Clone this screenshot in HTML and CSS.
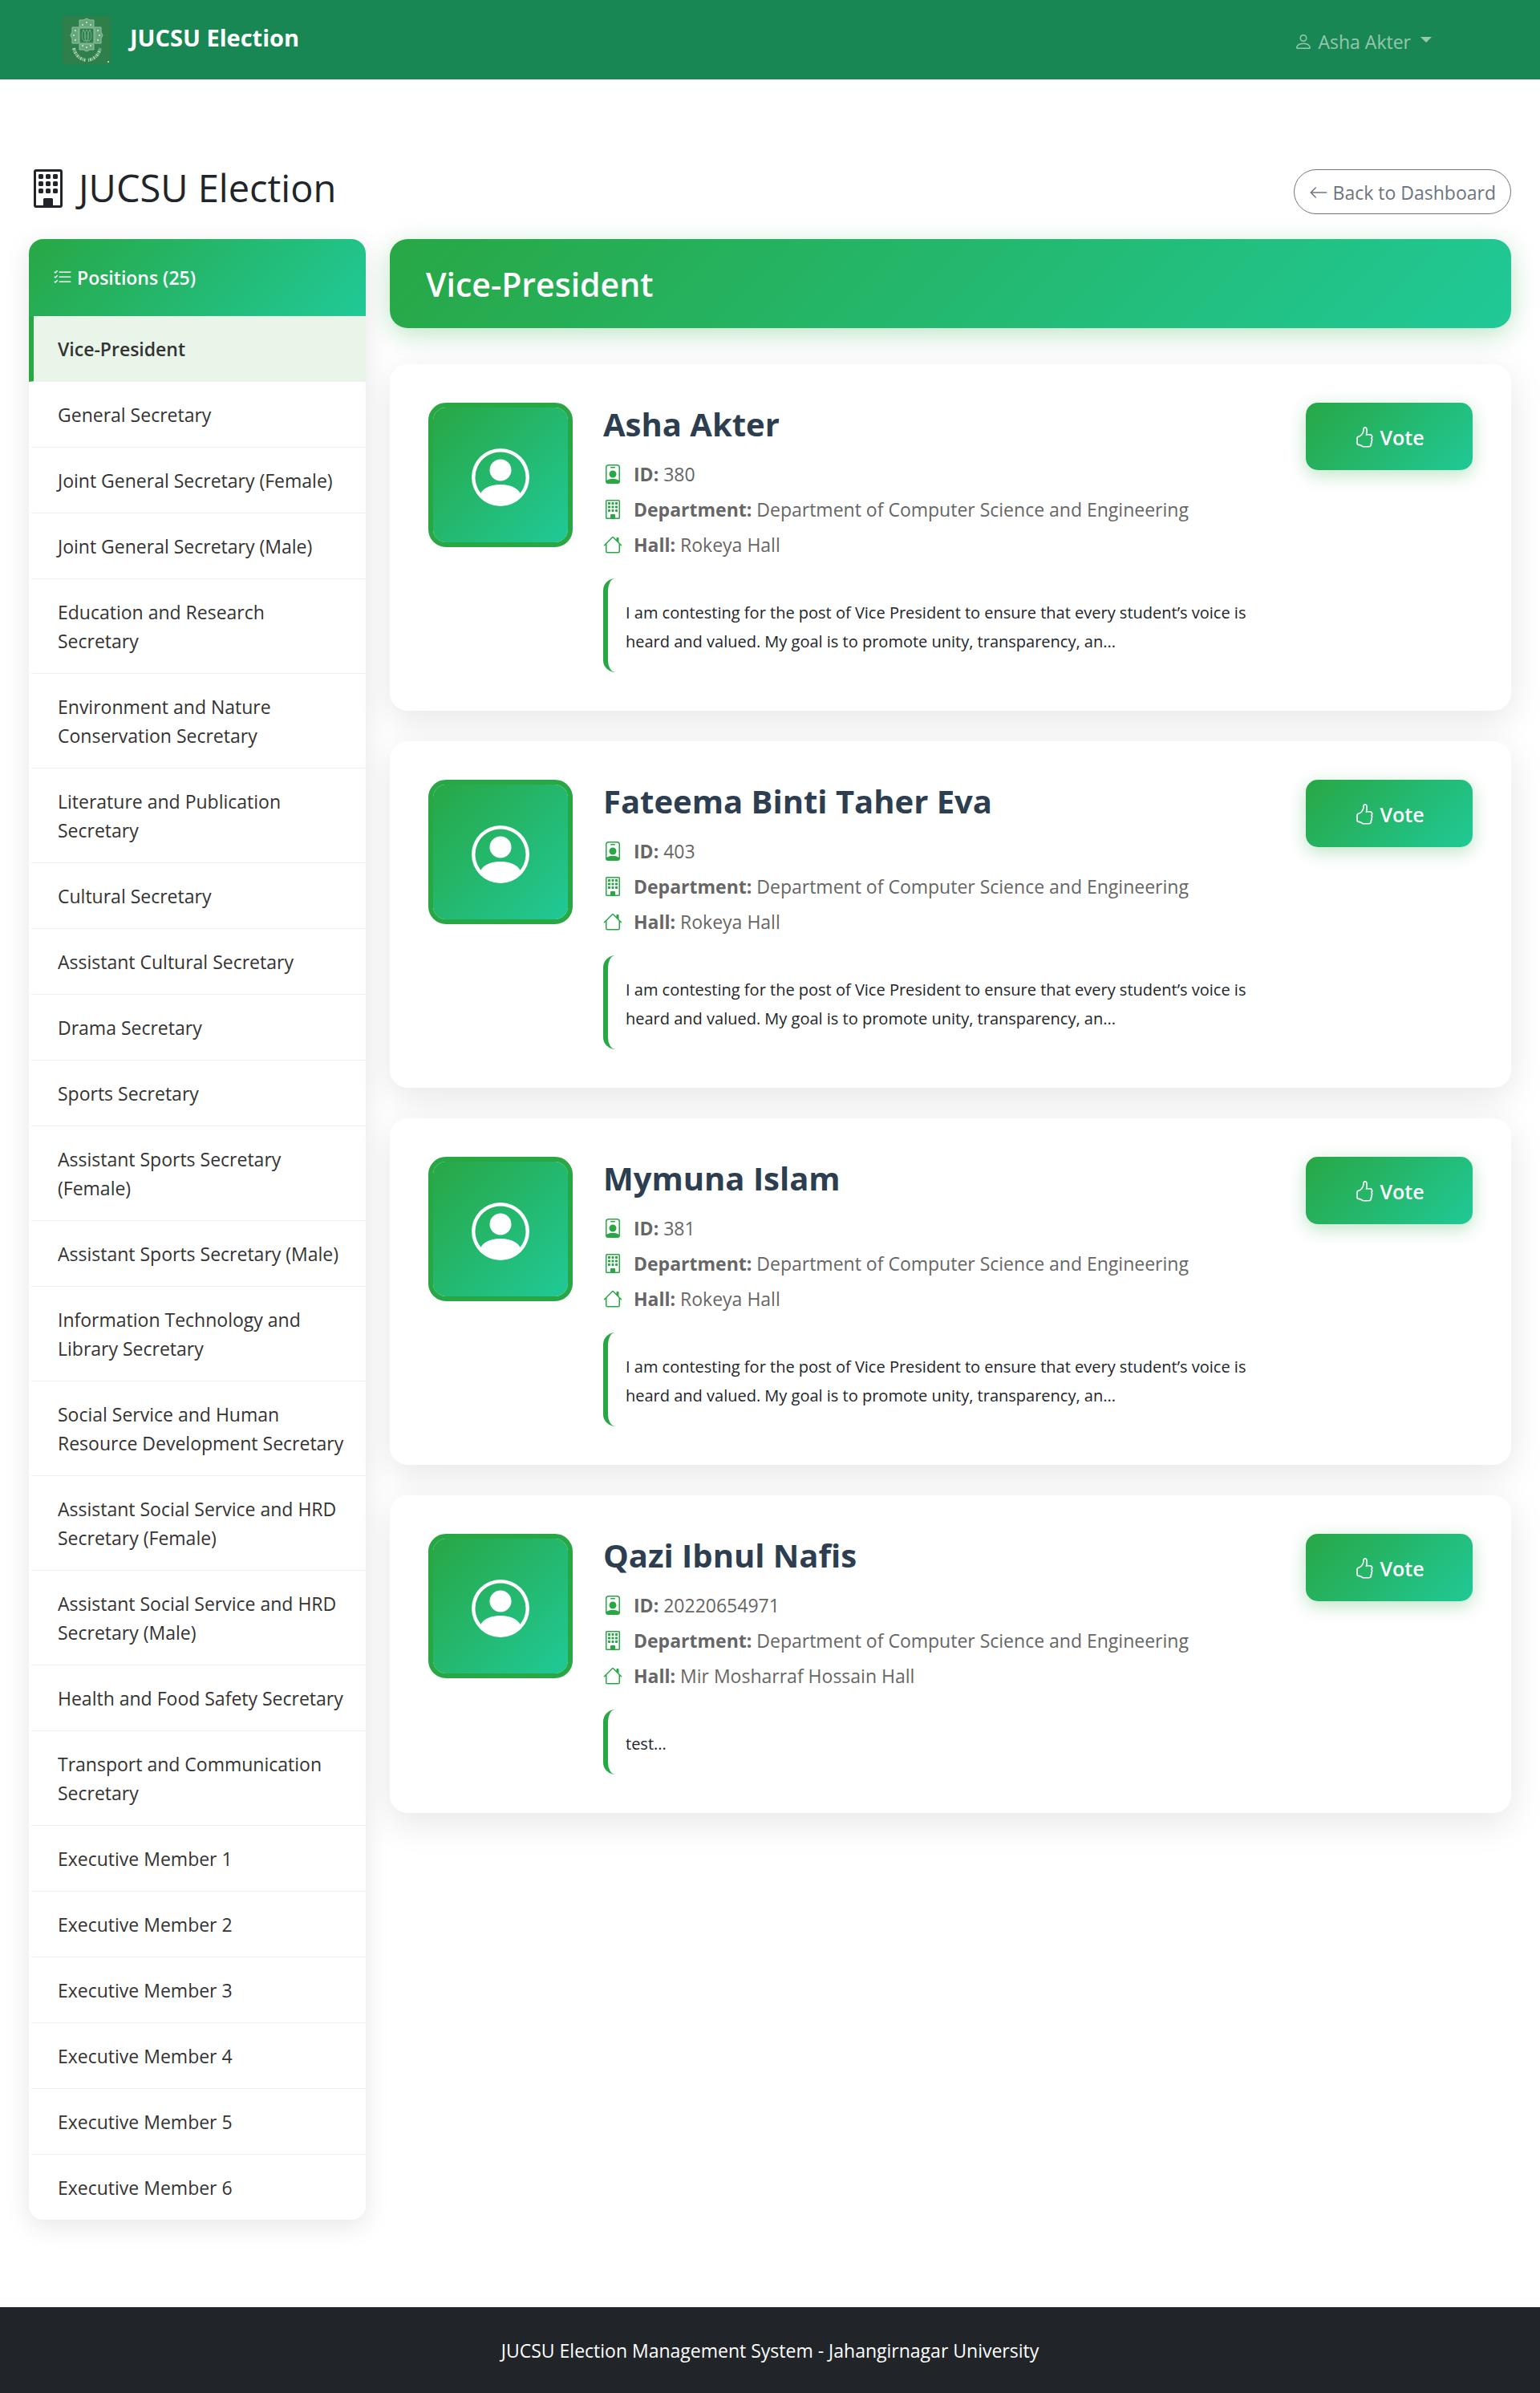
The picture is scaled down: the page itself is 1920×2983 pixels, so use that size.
FILE: index.html
```html
<!DOCTYPE html>
<html lang="en">
<head>
<meta charset="utf-8">
<meta name="viewport" content="width=device-width, initial-scale=1">
<title>JUCSU Election</title>
<link rel="stylesheet" href="styles.css">
</head>
<body>
<svg class="sprite" aria-hidden="true">
  <symbol id="person" viewBox="0 0 16 16"><path d="M8 8a3 3 0 1 0 0-6 3 3 0 0 0 0 6m2-3a2 2 0 1 1-4 0 2 2 0 0 1 4 0m4 8c0 1-1 1-1 1H3s-1 0-1-1 1-4 6-4 6 3 6 4m-1-.004c-.001-.246-.154-.986-.832-1.664C11.516 10.68 10.289 10 8 10s-3.516.68-4.168 1.332c-.678.678-.83 1.418-.832 1.664z"/></symbol>
  <symbol id="building" viewBox="0 0 16 16"><path d="M4 2.5a.5.5 0 0 1 .5-.5h1a.5.5 0 0 1 .5.5v1a.5.5 0 0 1-.5.5h-1a.5.5 0 0 1-.5-.5zm3 0a.5.5 0 0 1 .5-.5h1a.5.5 0 0 1 .5.5v1a.5.5 0 0 1-.5.5h-1a.5.5 0 0 1-.5-.5zm3 0a.5.5 0 0 1 .5-.5h1a.5.5 0 0 1 .5.5v1a.5.5 0 0 1-.5.5h-1a.5.5 0 0 1-.5-.5zM4 5.5a.5.5 0 0 1 .5-.5h1a.5.5 0 0 1 .5.5v1a.5.5 0 0 1-.5.5h-1a.5.5 0 0 1-.5-.5zm3 0a.5.5 0 0 1 .5-.5h1a.5.5 0 0 1 .5.5v1a.5.5 0 0 1-.5.5h-1a.5.5 0 0 1-.5-.5zm3 0a.5.5 0 0 1 .5-.5h1a.5.5 0 0 1 .5.5v1a.5.5 0 0 1-.5.5h-1a.5.5 0 0 1-.5-.5zM4 8.500a.5.5 0 0 1 .5-.5h1a.5.5 0 0 1 .5.5v1a.5.5 0 0 1-.5.5h-1a.5.5 0 0 1-.5-.5zm3 0a.5.5 0 0 1 .5-.5h1a.5.5 0 0 1 .5.5v1a.5.5 0 0 1-.5.5h-1a.5.5 0 0 1-.5-.5zm3 0a.5.5 0 0 1 .5-.5h1a.5.5 0 0 1 .5.5v1a.5.5 0 0 1-.5.5h-1a.5.5 0 0 1-.5-.5z"/><path d="M2 1a1 1 0 0 1 1-1h10a1 1 0 0 1 1 1v14a1 1 0 0 1-1 1H3a1 1 0 0 1-1-1zm11 0H3v14h3v-2.5a.5.5 0 0 1 .5-.5h3a.5.5 0 0 1 .5.5V15h3z"/></symbol>
  <symbol id="arrow-left" viewBox="0 0 16 16"><path d="M15 8a.5.5 0 0 0-.5-.5H2.707l3.147-3.146a.5.5 0 1 0-.708-.708l-4 4a.5.5 0 0 0 0 .708l4 4a.5.5 0 0 0 .708-.708L2.707 8.500H14.500A.5.5 0 0 0 15 8"/></symbol>
  <symbol id="list-check" viewBox="0 0 16 16"><path d="M5 11.500a.5.5 0 0 1 .5-.5h9a.5.5 0 0 1 0 1h-9a.5.5 0 0 1-.5-.5m0-4a.5.5 0 0 1 .5-.5h9a.5.5 0 0 1 0 1h-9a.5.5 0 0 1-.5-.5m0-4a.5.5 0 0 1 .5-.5h9a.5.5 0 0 1 0 1h-9a.5.5 0 0 1-.5-.5M3.854 2.146a.5.5 0 0 1 0 .708l-1.500 1.500a.5.5 0 0 1-.708 0l-.5-.5a.5.5 0 1 1 .708-.708L2 3.293l1.146-1.147a.5.5 0 0 1 .708 0m0 4a.5.5 0 0 1 0 .708l-1.500 1.500a.5.5 0 0 1-.708 0l-.5-.5a.5.5 0 1 1 .708-.708L2 7.293l1.146-1.147a.5.5 0 0 1 .708 0m0 4a.5.5 0 0 1 0 .708l-1.500 1.500a.5.5 0 0 1-.708 0l-.5-.5a.5.5 0 0 1 .708-.708l.146.147 1.146-1.147a.5.5 0 0 1 .708 0"/></symbol>
  <symbol id="person-circle" viewBox="0 0 16 16"><path d="M11 6a3 3 0 1 1-6 0 3 3 0 0 1 6 0"/><path fill-rule="evenodd" d="M0 8a8 8 0 1 1 16 0A8 8 0 0 1 0 8m8-7a7 7 0 0 0-5.468 11.370C3.242 11.226 4.805 10 8 10s4.757 1.225 5.468 2.370A7 7 0 0 0 8 1"/></symbol>
  <symbol id="badge" viewBox="0 0 16 16"><path d="M6.500 2a.5.5 0 0 0 0 1h3a.5.5 0 0 0 0-1zM11 8a3 3 0 1 1-6 0 3 3 0 0 1 6 0"/><path d="M4.500 0A2.500 2.500 0 0 0 2 2.500V14a2 2 0 0 0 2 2h8a2 2 0 0 0 2-2V2.500A2.500 2.500 0 0 0 11.500 0zM3 2.500A1.500 1.500 0 0 1 4.500 1h7A1.500 1.500 0 0 1 13 2.500v10.795a4.200 4.200 0 0 0-.776-.492C11.392 12.387 10.063 12 8 12s-3.392.387-4.224.803a4.200 4.200 0 0 0-.776.492z"/></symbol>
  <symbol id="house" viewBox="0 0 16 16"><path d="M8.707 1.500a1 1 0 0 0-1.414 0L.646 8.146a.5.5 0 0 0 .708.708L2 8.207V13.500A1.500 1.500 0 0 0 3.500 15h9a1.500 1.500 0 0 0 1.500-1.500V8.207l.646.647a.5.5 0 0 0 .708-.708L13 5.793V2.500a.5.5 0 0 0-.5-.5h-1a.5.5 0 0 0-.5.5v1.293zM13 7.207V13.500a.5.5 0 0 1-.5.5h-9a.5.5 0 0 1-.5-.5V7.207l5-5z"/></symbol>
  <symbol id="thumb" viewBox="0 0 16 16"><path d="M8.864.046C7.908-.193 7.020.53 6.956 1.466c-.072 1.051-.23 2.016-.428 2.590-.125.36-.479 1.013-1.040 1.639-.557.623-1.282 1.178-2.131 1.410C2.685 7.288 2 7.870 2 8.720v4.001c0 .845.682 1.464 1.448 1.545 1.070.114 1.564.415 2.068.723l.048.03c.272.165.578.348.97.484.397.136.861.217 1.466.217h3.500c.937 0 1.599-.477 1.934-1.064a1.860 1.860 0 0 0 .254-.912c0-.152-.023-.312-.077-.464.201-.263.38-.578.488-.901.11-.33.172-.762.004-1.149.069-.13.12-.269.159-.403.077-.27.113-.568.113-.857 0-.288-.036-.585-.113-.856a2 2 0 0 0-.138-.362 1.900 1.900 0 0 0 .234-1.734c-.206-.592-.682-1.100-1.200-1.272-.847-.282-1.803-.276-2.516-.211a10 10 0 0 0-.443.05 9.400 9.400 0 0 0-.062-4.509A1.380 1.380 0 0 0 9.125.111zM11.500 14.721H8c-.51 0-.863-.069-1.140-.164-.281-.097-.506-.228-.776-.393l-.04-.024c-.555-.339-1.198-.731-2.490-.868-.333-.036-.554-.29-.554-.55V8.720c0-.254.226-.543.62-.65 1.095-.3 1.977-.996 2.614-1.708.635-.71 1.064-1.475 1.238-1.978.243-.7.407-1.768.482-2.850.025-.362.36-.594.667-.518l.262.066c.16.04.258.143.288.255a8.340 8.340 0 0 1-.145 4.725.5.5 0 0 0 .595.644l.003-.001.014-.003.058-.014a9 9 0 0 1 1.036-.157c.663-.06 1.457-.054 2.110.164.175.058.45.3.57.65.107.308.087.67-.266 1.022l-.353.353.353.354c.043.043.105.141.154.315.048.167.075.37.075.581 0 .212-.027.414-.075.582-.05.174-.111.272-.154.315l-.353.353.353.354c.047.047.109.177.005.488a2.200 2.200 0 0 1-.505.805l-.353.353.353.354c.006.005.041.05.041.17a.9.9 0 0 1-.121.416c-.165.288-.503.56-1.066.56z"/></symbol>
</svg>

<nav class="navbar">
  <a class="brand" href="#">
    <svg class="crest" viewBox="0 0 60 60" aria-hidden="true">
      <rect width="60" height="60" fill="#2e7f49"/>
      <g fill="#65a67c" stroke="#92c6a3" stroke-width="1">
        <path d="M21 5h5l4-2 4 2h5v9H21zM21 35h18v7h-5l-4 2-4-2h-5zM12 14h8v20h-8v-6l-2-4 2-4zM40 14h8v6l2 4-2 4v6h-8z"/>
      </g>
      <rect x="21" y="15" width="18" height="19" fill="#2e7f49" stroke="#92c6a3"/>
      <path d="M30 31v4M26 31h8M27 31c-4-3-3-9-1-14l3 7-1 7M33 31c4-3 3-9 1-14l-3 7 1 7M30 17c-4 7-3 11 0 14 3-3 4-7 0-14" fill="none" stroke="#6fae86"/>
      <g fill="#d4ecdc"><circle cx="30" cy="8" r="1"/><circle cx="25" cy="11" r="1"/><circle cx="35" cy="11" r="1"/><circle cx="30" cy="39" r="1"/><circle cx="25" cy="37" r="1"/><circle cx="35" cy="37" r="1"/><circle cx="16" cy="18" r="1"/><circle cx="14" cy="24" r="1"/><circle cx="16" cy="30" r="1"/><circle cx="44" cy="18" r="1"/><circle cx="46" cy="24" r="1"/><circle cx="44" cy="30" r="1"/><circle cx="57" cy="57" r="1"/></g>
      <path d="M14 40c2 9 8 14 15 15" fill="none" stroke="#a9d2b6" stroke-width="4" stroke-dasharray="2 1 1 1"/>
      <path d="M32 55c7-1 13-6 15-15" fill="none" stroke="#a9d2b6" stroke-width="4" stroke-dasharray="1 1 2 1"/>
    </svg>
    <span class="brand-name">JUCSU Election</span>
  </a>
  <button class="user-menu" type="button"><svg class="icon"><use href="#person"/></svg><span>Asha Akter</span><span class="caret"></span></button>
</nav>

<main class="page">
  <header class="page-head">
    <h1 class="page-title"><svg class="title-icon"><use href="#building"/></svg><span>JUCSU Election</span></h1>
    <a class="back" href="#"><svg class="icon"><use href="#arrow-left"/></svg><span>Back to Dashboard</span></a>
  </header>

  <div class="columns">
    <aside class="sidebar">
      <h2 class="sidebar-head"><svg class="icon"><use href="#list-check"/></svg><span>Positions (25)</span></h2>
      <nav class="positions">
        <a class="position active" href="#">Vice-President</a>
        <a class="position" href="#">General Secretary</a>
        <a class="position" href="#">Joint General Secretary (Female)</a>
        <a class="position" href="#">Joint General Secretary (Male)</a>
        <a class="position" href="#">Education and Research Secretary</a>
        <a class="position" href="#">Environment and Nature Conservation Secretary</a>
        <a class="position" href="#">Literature and Publication Secretary</a>
        <a class="position" href="#">Cultural Secretary</a>
        <a class="position" href="#">Assistant Cultural Secretary</a>
        <a class="position" href="#">Drama Secretary</a>
        <a class="position" href="#">Sports Secretary</a>
        <a class="position" href="#">Assistant Sports Secretary (Female)</a>
        <a class="position" href="#">Assistant Sports Secretary (Male)</a>
        <a class="position" href="#">Information Technology and Library Secretary</a>
        <a class="position" href="#">Social Service and Human Resource Development Secretary</a>
        <a class="position" href="#">Assistant Social Service and HRD Secretary (Female)</a>
        <a class="position" href="#">Assistant Social Service and HRD Secretary (Male)</a>
        <a class="position" href="#">Health and Food Safety Secretary</a>
        <a class="position" href="#">Transport and Communication Secretary</a>
        <a class="position" href="#">Executive Member 1</a>
        <a class="position" href="#">Executive Member 2</a>
        <a class="position" href="#">Executive Member 3</a>
        <a class="position" href="#">Executive Member 4</a>
        <a class="position" href="#">Executive Member 5</a>
        <a class="position" href="#">Executive Member 6</a>
      </nav>
    </aside>

    <section class="content">
      <h2 class="banner">Vice-President</h2>
      <div class="candidates">
        <article class="card">
          <div class="avatar"><svg class="avatar-icon"><use href="#person-circle"/></svg></div>
          <div class="info">
            <h3 class="name">Asha Akter</h3>
            <p class="detail"><svg class="icon"><use href="#badge"/></svg><span><strong>ID:</strong> 380</span></p>
            <p class="detail"><svg class="icon"><use href="#building"/></svg><span><strong>Department:</strong> Department of Computer Science and Engineering</span></p>
            <p class="detail"><svg class="icon"><use href="#house"/></svg><span><strong>Hall:</strong> Rokeya Hall</span></p>
            <p class="manifesto">I am contesting for the post of Vice President to ensure that every student’s voice is heard and valued. My goal is to promote unity, transparency, an...</p>
          </div>
          <button class="vote" type="button"><svg class="icon"><use href="#thumb"/></svg><span>Vote</span></button>
        </article>
        <article class="card">
          <div class="avatar"><svg class="avatar-icon"><use href="#person-circle"/></svg></div>
          <div class="info">
            <h3 class="name">Fateema Binti Taher Eva</h3>
            <p class="detail"><svg class="icon"><use href="#badge"/></svg><span><strong>ID:</strong> 403</span></p>
            <p class="detail"><svg class="icon"><use href="#building"/></svg><span><strong>Department:</strong> Department of Computer Science and Engineering</span></p>
            <p class="detail"><svg class="icon"><use href="#house"/></svg><span><strong>Hall:</strong> Rokeya Hall</span></p>
            <p class="manifesto">I am contesting for the post of Vice President to ensure that every student’s voice is heard and valued. My goal is to promote unity, transparency, an...</p>
          </div>
          <button class="vote" type="button"><svg class="icon"><use href="#thumb"/></svg><span>Vote</span></button>
        </article>
        <article class="card">
          <div class="avatar"><svg class="avatar-icon"><use href="#person-circle"/></svg></div>
          <div class="info">
            <h3 class="name">Mymuna Islam</h3>
            <p class="detail"><svg class="icon"><use href="#badge"/></svg><span><strong>ID:</strong> 381</span></p>
            <p class="detail"><svg class="icon"><use href="#building"/></svg><span><strong>Department:</strong> Department of Computer Science and Engineering</span></p>
            <p class="detail"><svg class="icon"><use href="#house"/></svg><span><strong>Hall:</strong> Rokeya Hall</span></p>
            <p class="manifesto">I am contesting for the post of Vice President to ensure that every student’s voice is heard and valued. My goal is to promote unity, transparency, an...</p>
          </div>
          <button class="vote" type="button"><svg class="icon"><use href="#thumb"/></svg><span>Vote</span></button>
        </article>
        <article class="card">
          <div class="avatar"><svg class="avatar-icon"><use href="#person-circle"/></svg></div>
          <div class="info">
            <h3 class="name">Qazi Ibnul Nafis</h3>
            <p class="detail"><svg class="icon"><use href="#badge"/></svg><span><strong>ID:</strong> 20220654971</span></p>
            <p class="detail"><svg class="icon"><use href="#building"/></svg><span><strong>Department:</strong> Department of Computer Science and Engineering</span></p>
            <p class="detail"><svg class="icon"><use href="#house"/></svg><span><strong>Hall:</strong> Mir Mosharraf Hossain Hall</span></p>
            <p class="manifesto">test...</p>
          </div>
          <button class="vote" type="button"><svg class="icon"><use href="#thumb"/></svg><span>Vote</span></button>
        </article>
      </div>
    </section>
  </div>
</main>

<footer class="footer">JUCSU Election Management System - Jahangirnagar University</footer>
</body>
</html>
```

FILE: styles.css
```css
:root {
  --green: #28a745;
  --gradient: linear-gradient(135deg, #28a745 0%, #20c997 100%);
}

* {
  box-sizing: border-box;
}

body {
  margin: 0;
  min-height: 100vh;
  display: flex;
  flex-direction: column;
  background: #fff;
  color: #212529;
  font-family: "Open Sans", "Noto Sans", sans-serif;
  font-size: 23px;
  line-height: 36px;
}

h1, h2, h3, p {
  margin: 0;
}

a {
  color: inherit;
  text-decoration: none;
}

button {
  font: inherit;
  cursor: pointer;
}

.sprite {
  display: none;
}

.icon {
  flex: none;
  width: 24px;
  height: 24px;
  fill: currentColor;
}

/* Top bar */
.navbar {
  display: flex;
  align-items: center;
  justify-content: space-between;
  height: 99px;
  padding: 0 135px 0 78px;
  background: #198754;
}

.brand {
  display: flex;
  align-items: center;
  gap: 24px;
  color: #fff;
  font-size: 29px;
  font-weight: 700;
}

.brand-name {
  padding-bottom: 5px;
}

.crest {
  width: 60px;
  height: 60px;
}

.user-menu {
  display: flex;
  align-items: center;
  gap: 6px;
  padding: 4px 0 0;
  border: 0;
  background: none;
  color: rgba(255, 255, 255, .55);
}

.caret {
  margin: 0 0 5px 6px;
  border: 7px solid transparent;
  border-top-color: currentColor;
  border-bottom: 0;
}

/* Page heading */
.page {
  flex: 1;
  padding: 107px 36px 109px;
}

.page-head {
  display: flex;
  align-items: flex-end;
  justify-content: space-between;
  margin-bottom: 31px;
}

.page-title {
  display: flex;
  align-items: center;
  gap: 14px;
  padding-bottom: 4px;
  font-size: 47px;
  font-weight: 500;
  line-height: 57px;
}

.title-icon {
  width: 48px;
  height: 48px;
  fill: currentColor;
}

.back {
  display: flex;
  align-items: center;
  gap: 6px;
  padding: 10px 18px 8px;
  border: 1px solid #6c757d;
  border-radius: 28px;
  color: #6c757d;
}

.columns {
  display: flex;
  align-items: flex-start;
  gap: 30px;
}

/* Position list */
.sidebar {
  flex: 0 0 420px;
  overflow: hidden;
  border-radius: 18px;
  background: #fff;
  box-shadow: 0 8px 32px rgba(0, 0, 0, .1);
}

.sidebar-head {
  display: flex;
  align-items: center;
  gap: 6px;
  padding: 30px;
  background: var(--gradient);
  color: #fff;
  font-size: 23px;
  font-weight: 600;
}

.position {
  display: block;
  padding: 23px 24px 22px 30px;
  border-left: 6px solid transparent;
  border-bottom: 1px solid #f0f0f0;
  color: #333;
}

.position:last-child {
  border-bottom: 0;
}

.position.active {
  border-left-color: var(--green);
  background: #e8f5e8;
  font-weight: 600;
}

/* Candidates */
.content {
  flex: 1;
  min-width: 0;
}

.banner {
  margin-bottom: 45px;
  padding: 31px 45px 29px;
  border-radius: 22px;
  background: var(--gradient);
  box-shadow: 0 8px 32px rgba(40, 167, 69, .3);
  color: #fff;
  font-size: 41px;
  font-weight: 600;
  line-height: 51px;
}

.candidates {
  display: flex;
  flex-direction: column;
  gap: 38px;
}

.card {
  display: flex;
  align-items: flex-start;
  padding: 48px;
  border-radius: 22px;
  background: #fff;
  box-shadow: 0 12px 45px rgba(0, 0, 0, .1);
}

.avatar {
  flex: none;
  display: flex;
  align-items: center;
  justify-content: center;
  width: 180px;
  height: 180px;
  margin-right: 38px;
  padding-top: 6px;
  border: 6px solid var(--green);
  border-radius: 22px;
  background: var(--gradient) padding-box;
}

.avatar-icon {
  width: 72px;
  height: 72px;
  fill: #fff;
}

.info {
  flex: 1;
  min-width: 0;
}

.name {
  margin-bottom: 17px;
  color: #2c3e50;
  font-size: 40px;
  font-weight: 700;
  line-height: 54px;
}

.detail {
  display: flex;
  align-items: center;
  gap: 14px;
  margin-bottom: 8px;
  color: #666;
}

.detail .icon {
  color: var(--green);
}

.manifesto {
  margin-top: 24px;
  padding: 25px 22px 20px;
  border-left: 6px solid var(--green);
  border-radius: 15px;
  font-size: 20px;
}

.vote {
  display: flex;
  align-items: center;
  justify-content: center;
  gap: 6px;
  width: 208px;
  height: 84px;
  margin-left: 38px;
  padding: 2px 0 0;
  border: 0;
  border-radius: 15px;
  background: var(--gradient);
  box-shadow: 0 6px 22px rgba(40, 167, 69, .3);
  color: #fff;
  font-size: 25px;
  font-weight: 600;
}

.vote .icon {
  width: 26px;
  height: 26px;
}

.footer {
  padding: 37px 36px 35px;
  background: #212529;
  color: #fff;
  line-height: 35px;
  text-align: center;
}
```
